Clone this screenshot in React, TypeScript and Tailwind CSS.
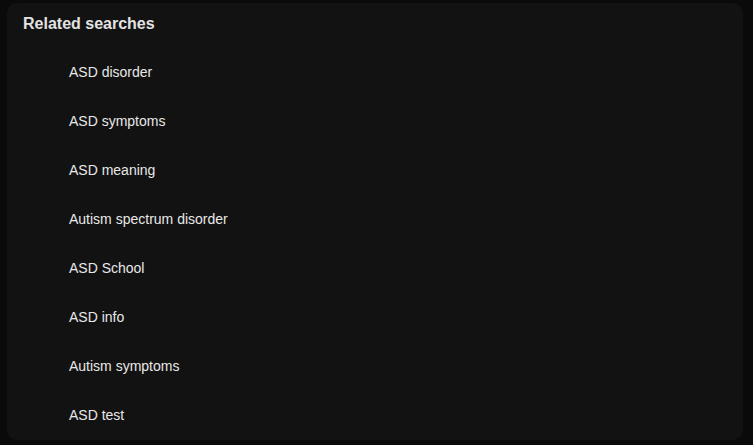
const searches = [
    "ASD disorder",
    "ASD symptoms",
    "ASD meaning",
    "Autism spectrum disorder",
    "ASD School",
    "ASD info",
    "Autism symptoms",
    "ASD test",
];

export default function App() {
    return (
        <div
            className="w-[753px] h-[445px] bg-[#0a0a0a] pt-[3px] pl-[7px] overflow-hidden"
            style={{ fontFamily: '"Liberation Sans", Arial, sans-serif' }}
        >
            <div className="w-[736px] h-[437px] bg-[#121212] rounded-[10px] pt-[9px] pl-[16px]">
                <h2 className="text-[16px] leading-6 font-bold text-[#e3e3e3]">
                    Related searches
                </h2>
                <ul className="mt-[12px] pl-[46px]">
                    {searches.map((item) => (
                        <li
                            key={item}
                            className="h-[49px] flex items-center text-[14px] text-[#e8e8e8]"
                        >
                            {item}
                        </li>
                    ))}
                </ul>
            </div>
        </div>
    );
}
